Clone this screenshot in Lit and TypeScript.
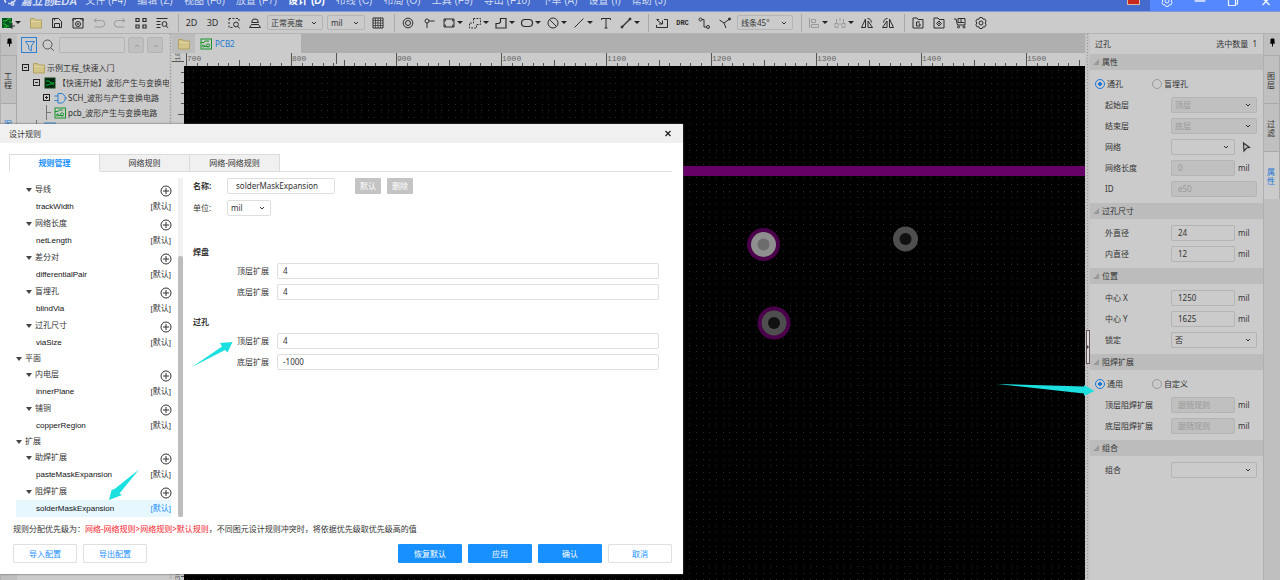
import { LitElement, html, css, svg, nothing } from "lit";
import { customElement, property } from "lit/decorators.js";
import { classMap } from "lit/directives/class-map.js";

const FONT = css`"Noto Sans", "Noto Sans CJK SC", sans-serif`;

/* Icons share a 16 x 16 grid and take the current text colour. */
const ICONS: Record<string, unknown> = {
  board: svg`<rect x="0" y="3" width="10" height="10" fill="#052" stroke="none"/><path d="M1 6h3l2-2h3M1 9h2l2 2h2M7 7h3M2 12h3" stroke="#3c3" /><path d="M7 11h6M10 8v6" stroke="#333"/>`,
  folder: svg`<path d="M2.5 3.5h4l1 1.500h6v8h-11z" fill="#d3c58a" stroke="#b3a262"/><path d="M3 6.500h10" stroke="#e2d7a4"/>`,
  save: svg`<path d="M3.500 3.500h6l3 3v6h-9z"/><path d="M5.500 12.500v-4h5v4M5.500 3.500v2"/>`,
  preview: svg`<path d="M3 6V3.500h10V6M3 3.500v9.500h10V3.500M5 3v2M11 3v2"/><circle cx="8" cy="9" r="2.500"/><circle cx="8" cy="9" r=".6"/>`,
  undo: svg`<path d="M5.500 3.500L3 5.500l2.500 2M3 5.500h7.500a2.500 2.500 0 0 1 0 6.500H3.500"/>`,
  redo: svg`<path d="M10.500 3.500L13 5.500l-2.500 2M13 5.500H5.500a2.500 2.500 0 0 0 0 6.500h7"/>`,
  apps: svg`<path d="M3 3.500h3v3H3zM10 3.500h3v3h-3zM3 10h3v3H3zM10 10h3v3h-3z" stroke-width="1.200"/>`,
  listfind: svg`<path d="M2.500 3.500h11M2.500 6.500h4M2.500 9.500h4M2.500 12.500h4" stroke-width="1.200"/><circle cx="10.500" cy="9" r="2.400"/><path d="M12.200 10.700l1.800 2.200"/>`,
  selfind: svg`<path d="M3 3.500h10v4M3 3.500v9h4" stroke-dasharray="2 1.500"/><circle cx="10" cy="9.500" r="2.400"/><path d="M11.700 11.200l2 2.300"/>`,
  layers: svg`<path d="M5 7.500V6a3 2 0 0 1 6 0v1.500M2.500 12.500l2-3h7l2 3zM4.500 7.500h7"/>`,
  dots: svg`<path d="M3 3h10v10H3z"/><path d="M5.500 3v10M8 3v10M10.500 3v10M3 5.500h10M3 8h10M3 10.500h10" stroke-width=".7"/>`,
  via: svg`<circle cx="8" cy="8" r="4.800"/><circle cx="8" cy="8" r="2.500"/>`,
  pad: svg`<circle cx="6" cy="6" r="2"/><path d="M8 6h5.500M6 8v5"/>`,
  rect: svg`<path d="M3 4h10v8H3z"/><path d="M3 6h1.500V4M13 6h-1.500V4M3 10h1.500v2M13 10h-1.500v2" stroke-width=".8"/>`,
  dashpoly: svg`<path d="M6.500 3.500h7v6h-4v3.500h-7V8h4z" stroke-dasharray="1.800 1.200"/>`,
  poly: svg`<path d="M7.500 3.500h5.500v9.500H3V8.500h3l1.500-1.500z" stroke-width="1.200"/>`,
  oval: svg`<rect x="2.500" y="4.500" width="11" height="7" rx="3.500" stroke-width="1.200"/>`,
  forbid: svg`<circle cx="8" cy="8" r="5"/><path d="M4.500 4.500l7 7"/>`,
  line: svg`<path d="M3.500 12.500L12.500 3.500"/>`,
  text: svg`<path d="M3.500 5V3.500h9V5M8 3.500v9.500M6.500 13h3"/>`,
  measure: svg`<path d="M4 12l8-8" stroke-width="1.200"/><circle cx="4" cy="12" r="1" fill="currentColor"/><circle cx="12" cy="4" r="1" fill="currentColor"/>`,
  import: svg`<path d="M5 4.500H2.500M10 4.500h3.500v8h-11V10"/><path d="M3 5l5 4M8.500 5.500V9H5"/>`,
  route: svg`<circle cx="4.500" cy="4.500" r="1.500"/><circle cx="12" cy="12" r="1.500"/><path d="M6 4.500h2v7.500h2.500"/>`,
  fan: svg`<path d="M2.500 5l4.500 3 2 5M7 8l5-3.500"/><circle cx="12.500" cy="4" r="1" fill="currentColor"/>`,
  align: svg`<path d="M3.500 3v10M5.500 4.500h4v3h-4zM5.500 9.500h7v3h-7z"/>`,
  distribute: svg`<path d="M3 8.500h3v4H3zM10 8.500h3v4h-3zM4.500 4v4M11.500 4v4M8 3v3M8 8v2"/>`,
  fliph: svg`<path d="M6.500 4v8.500h-4zM9 12.500h4.500L9 6z"/><path d="M8.500 3.500c2.500 0 3.500 1.500 4 4"/>`,
  flipv: svg`<path d="M9.500 4v8.500h4zM7 12.500H2.500L7 6z"/><path d="M7.500 3.500c-2.500 0-3.500 1.500-4 4"/>`,
  docg: svg`<path d="M3 3h4l1 1.500h5V13H3z"/><path d="M10 7H6.500v4H10V9H8.500"/>`,
  docd: svg`<path d="M3 3h4l1 1.500h5V13H3z"/><path d="M8 6l2.500 2.500L8 11 5.500 8.500z"/><circle cx="8" cy="8.500" r=".6"/>`,
  cart: svg`<path d="M2 4h2l1.500 6H13V3.500H6v4h6M9 3.500v4"/><circle cx="6.500" cy="12" r="1"/><circle cx="12" cy="12" r="1"/>`,
  gear: svg`<path d="M6.800 2.500h2.400l.8 1.700 1.900-.1 1.200 2.100L12.200 8l.9 1.800-1.200 2.100-1.900-.1-.8 1.700H6.800L6 11.800l-1.900.1-1.200-2.100L3.800 8l-.9-1.800 1.200-2.100 1.900.1z"/><circle cx="8" cy="8" r="2"/>`,
  filter: svg`<path d="M3.500 3.500h9L9.300 8v5L6.700 11V8z"/>`,
  search: svg`<circle cx="7.500" cy="7.500" r="4.500"/><path d="M10.800 10.800l3 3"/>`,
  up: svg`<path d="M6 9l2-2 2 2"/>`,
  down: svg`<path d="M6 7l2 2 2-2"/>`,
  pcb: svg`<rect x="3" y="3" width="10.500" height="10"/><path d="M3 6.500h3l1-1.500h4M6 10.500h5"/><circle cx="10" cy="9.500" r="1.600"/><circle cx="5.500" cy="10" r="1"/>`,
  sch: svg`<path d="M6 3.500h3a4 4.500 0 0 1 0 9.500H6zM2.500 6h3.500M2.500 10.500h3.500M13 8h2"/>`,
  sheet: svg`<rect x="3" y="3" width="10" height="10"/>`,
  chip: svg`<rect x="3" y="3" width="10" height="10" fill="#021" stroke="#141"/><path d="M4 6h3l2 2h3M4 10h2l2-1h4" stroke="#0b3"/>`,
  pin: svg`<path d="M7 5h3v4h-3z" fill="currentColor"/><path d="M6 9h5M8.500 9v3.500"/>`,
  plus: svg`<circle cx="8" cy="8" r="5"/><path d="M5 8h6M8 5v6"/>`,
  close: svg`<path d="M5.500 5l5 5M10.500 5l-5 5" stroke-width="1.300"/>`,
  pick: svg`<path d="M5.500 4l6 4.500-3 .5-2.500 3z" stroke-width="1.200"/>`,
  brand: svg`<path d="M3 9.500a3.500 3.500 0 0 1 1-6h6a3 3 0 0 1 .5 5.500H8M5 10.500h3" stroke-width="1.700"/><circle cx="9.500" cy="11" r="1.300" stroke-width="1.400"/>`,
  min: svg`<path d="M2.500 8h11" stroke-width="1.500"/>`,
  restore: svg`<path d="M3.500 5h7v7.500h-7zM5.500 5V3h7v8h-2" stroke-width="1.200"/>`,
  cross: svg`<path d="M4.500 5l7 7M11.500 5l-7 7" stroke-width="1.500"/>`,
};

const icon = (name: string) => html`<svg class="icon" viewBox="0 0 16 16" aria-hidden="true">${ICONS[name]}</svg>`;

const shared = css`
  * { box-sizing: border-box; }
  .icon { width: 16px; height: 16px; flex: none; display: block; fill: none; stroke: currentColor; stroke-width: 1; }
  button, input, select { font: inherit; color: inherit; margin: 0; padding: 0; border: 0; background: none; border-radius: 0; outline: 0; }
  input, select { min-width: 0; }
  .pick { display: grid; align-items: center; grid-template-rows: 100%; }
  .pick > * { grid-area: 1 / 1; }
  .pick select { appearance: none; width: 100%; height: 100%; padding: 0 3px; line-height: 12px; opacity: 1; }
  .pick .icon { justify-self: end; pointer-events: none; color: #333; }
`;

/* ---------- Title bar ---------- */
@customElement("title-bar")
class TitleBar extends LitElement {
  static styles = [shared, css`
    :host { display: flex; align-items: flex-end; height: 12px; overflow: hidden; background: #446bcd; color: #d3dcf2;
      border-bottom: 1px solid #7f9bdc; font: 10px/20px "Liberation Sans", "Noto Sans CJK SC", sans-serif; flex: none; }
    .brand { display: flex; align-items: center; height: 20px; gap: 2px; padding: 0 8px 0 3px; font-size: 11px; font-weight: 700; font-style: italic; white-space: nowrap; }
    nav { display: flex; flex: 1; gap: 11px; white-space: nowrap; }
    nav button { line-height: 20px; height: 20px; }
    .on { color: #fff; font-weight: 700; }
    .flag { width: 13px; height: 5px; margin-right: 10px; background: #c8281e; border: 1px solid #d9b9a0; border-top: 0; flex: none; align-self: flex-start; }
    .win { display: flex; height: 20px; padding: 0 6px 0 9px; gap: 17px; background: #5588ff; color: #e8efff; align-items: center; }
  `];
  render() {
    const menus = ["文件 (F4)", "编辑 (Z)", "视图 (F6)", "放置 (F7)", "设计 (D)", "布线 (C)", "布局 (O)", "工具 (F9)", "导出 (F10)", "下单 (A)", "设置 (I)", "帮助 (J)"];
    return html`
      <div class="brand">${icon("brand")}<span>嘉立创EDA</span></div>
      <nav>${menus.map((m, i) => html`<button class=${classMap({ on: i === 4 })}>${m}</button>`)}</nav>
      <span class="flag"></span>
      <div class="win">${[["gear", "设置"], ["min", "最小化"], ["restore", "还原"], ["cross", "关闭"]].map(([n, l]) => html`<button aria-label=${l}>${icon(n)}</button>`)}</div>
    `;
  }
}

/* ---------- Toolbar ---------- */
@customElement("tool-bar")
class ToolBar extends LitElement {
  static styles = [shared, css`
    :host { display: flex; align-items: center; height: 22px; background: #cbcbcb; border-bottom: 1px solid #b2b2b2; color: #2c2c2c; flex: none;
      font: 8px/14px ${FONT}; }
    .group { display: flex; align-items: center; flex: none; padding: 0 6px 0 2px; }
    .group + .group { border-left: 1px solid #aaa; }
    .group button { display: flex; align-items: center; justify-content: center; width: 21px; height: 18px; flex: none; }
    .group button.split { width: 26px; justify-content: flex-start; padding-left: 2px; }
    .group.first button.split { width: 23px; padding-left: 0; }
    .first .caret { margin-left: -3px; }
    .caret { border: 3px solid transparent; border-top: 3px solid #222; border-bottom: 0; width: 0; flex: none; }
    .group .off { color: #9a9a9a; }
    .dim { font-size: 9px; }
    .drc { font: 700 7px/14px "Liberation Mono", monospace; }
    .pick { height: 15px; border: 1px solid #b4b4b4; border-radius: 2px; margin: 0 2px; color: #333; }
    .wide { width: 56px; }
    .narrow { width: 38px; }
  `];
  private btn(name: string, split = false, off = false) {
    return html`<button aria-label=${name} class=${classMap({ split, off })}>${icon(name)}${split ? html`<i class="caret"></i>` : nothing}</button>`;
  }
  private pick(label: string, size: string) {
    return html`<span class="pick ${size}"><select aria-label=${label}><option>${label}</option></select>${icon("down")}</span>`;
  }
  render() {
    return html`
      <div class="group first">${this.btn("board", true)}${["folder", "save", "preview"].map((n) => this.btn(n))}${this.btn("undo", false, true)}${this.btn("redo", false, true)}${this.btn("apps")}${this.btn("listfind")}</div>
      <div class="group"><button class="dim">2D</button><button class="dim">3D</button>${this.btn("selfind")}${this.btn("layers")}${this.pick("正常亮度", "wide")}${this.pick("mil", "narrow")}${this.btn("dots")}</div>
      <div class="group">${this.btn("via")}${this.btn("pad")}${["rect", "dashpoly", "poly", "oval", "forbid", "line"].map((n) => this.btn(n, true))}${this.btn("text")}${this.btn("measure", true)}</div>
      <div class="group">${this.btn("import")}<button class="drc">DRC</button>${this.btn("route")}${this.btn("fan")}${this.pick("线条45°", "wide")}</div>
      <div class="group">${this.btn("align", true, true)}${this.btn("distribute", true, true)}${this.btn("fliph")}${this.btn("flipv")}</div>
      <div class="group">${["docg", "docd", "cart", "gear"].map((n) => this.btn(n))}</div>
    `;
  }
}

/* ---------- Vertical tab strip ---------- */
@customElement("side-tabs")
class SideTabs extends LitElement {
  @property({ type: Array }) tabs: string[] = [];
  @property({ type: Number }) active = 0;
  static styles = [shared, css`
    :host { display: flex; flex-direction: column; width: 17px; flex: none; background: #bfbfbf; color: #333; font: 8px/9px ${FONT}; border-left: 1px solid #b0b0b0; }
    .pin { display: flex; height: 21px; color: #000; }
    .tab { width: 100%; height: 48px; padding: 0 5px 0 3px; border-top: 1px solid #aaa; border-right: 1px solid #aaa; background: #c0c0c0; overflow-wrap: anywhere; white-space: normal; }
    .on { background: #cbcbcb; color: #1a78d8; }
  `];
  render() {
    return html`<button class="pin" aria-label="固定">${icon("pin")}</button>
      ${this.tabs.map((t, i) => html`<button class=${classMap({ tab: true, on: i === this.active })}>${t}</button>`)}`;
  }
}

/* ---------- Project tree ---------- */
@customElement("project-panel")
class ProjectPanel extends LitElement {
  static styles = [shared, css`
    :host { display: block; width: 152px; flex: none; background: #cbcbcb; color: #333; font: 8px/15px ${FONT}; overflow: hidden; }
    .bar { display: flex; align-items: center; padding: 2px 6px 6px 4px; gap: 3px; height: 26px; }
    .filter { border: 1px solid #2e80d0; color: #2e80d0; width: 16px; height: 16px; display: grid; place-items: center; }
    .find { color: #555; }
    .bar input { flex: 1; height: 16px; border: 1px solid #b4b4b4; border-radius: 2px; padding: 0 3px; }
    .step { width: 16px; height: 16px; border: 1px solid #b4b4b4; background: #c0c0c0; border-radius: 2px; color: #999; display: grid; place-items: center; }
    .row { display: flex; align-items: center; height: 15px; white-space: nowrap; }
    .d0 { padding-left: 5px; }
    .d1 { padding-left: 16px; }
    .d2 { padding-left: 26px; }
    .box { width: 7px; height: 7px; border: 1px solid #222; margin-right: 2px; flex: none; background: linear-gradient(#222, #222) center / 3px 1px no-repeat; }
    .box.more { background: linear-gradient(#222, #222) center / 3px 1px no-repeat, linear-gradient(#222, #222) center / 1px 3px no-repeat; }
    .twig { width: 5px; height: 15px; margin: 0 1px 0 3px; border-left: 1px solid #777; flex: none; background: linear-gradient(#777, #777) center / 100% 1px no-repeat; }
    .green { color: #16962a; }
    .blue { color: #2e80d0; }
  `];
  render() {
    return html`
      <div class="bar">
        <button class="filter" aria-label="过滤">${icon("filter")}</button><span class="find">${icon("search")}</span>
        <input aria-label="搜索" />
        <button class="step" aria-label="上一个">${icon("up")}</button><button class="step" aria-label="下一个">${icon("down")}</button>
      </div>
      <div class="row d0"><i class="box"></i>${icon("folder")}<span>示例工程_快速入门</span></div>
      <div class="row d1"><i class="box"></i>${icon("chip")}<span>【快速开始】波形产生与变换电路</span></div>
      <div class="row d2"><i class="box more"></i><span class="blue">${icon("sch")}</span><span>SCH_波形与产生变换电路</span></div>
      <div class="row d2"><i class="twig"></i><span class="green">${icon("pcb")}</span><span>pcb_波形产生与变换电路</span></div>
      <div class="row d1"><i class="twig"></i><span class="blue">${icon("sheet")}</span></div>
    `;
  }
}

/* ---------- Board canvas with rulers ---------- */
const STEP = 105; /* pixels for 100 mil */

@customElement("board-view")
class BoardView extends LitElement {
  static styles = [shared, css`
    :host { display: flex; flex-direction: column; flex: 1; min-width: 0; background: #000; font: 8px/16px ${FONT}; }
    .tabs { display: flex; height: 19px; flex: none; background: #afafaf; }
    .tabs button { display: flex; align-items: center; }
    .home { width: 23px; justify-content: center; background: #bcbcbc; }
    .doc { width: 106px; padding: 0 3px; gap: 1px; background: #cbcbcb; color: #1a78d8; }
    .doc .icon { color: #16962a; }
    .top { display: block; width: 100%; height: 13px; flex: none; background: #cbcbcb; overflow: hidden; }
    .mid { display: flex; flex: 1; min-height: 0; }
    .left { display: block; width: 12px; height: 100%; flex: none; background: #cbcbcb; }
    .art { display: block; flex: 1; min-width: 0; height: 100%; }
    .tick { stroke: #555; fill: none; shape-rendering: crispEdges; }
    .num { font: 8px "Liberation Mono", monospace; fill: #666; }
  `];
  private ticks(start: number, count: number, vertical: boolean, depth: number) {
    let d = "";
    for (let i = 0; i < count; i++) {
      const p = Math.round(start + (i * STEP) / 10);
      const len = i % 10 === 0 ? depth : i % 5 === 0 ? 6 : 3;
      d += vertical ? `M${depth - len} ${p}.5h${len}` : `M${p}.5 ${depth - len}v${len}`;
    }
    return d;
  }
  render() {
    const xs = [...Array(24)].map((_, i) => i);
    let dots = "";
    for (let r = 0; r < 10; r++) for (let c = 0; c < 10; c++) dots += `M${Math.round(c * 6.7)} ${Math.round(r * 6.7)}h1v1h-1z`;
    return html`
      <div class="tabs"><button class="home" aria-label="工程">${icon("folder")}</button><button class="doc">${icon("pcb")}<span>PCB2</span></button></div>
      <svg class="top">
        <path class="tick" d=${this.ticks(14, 240, false, 13)} />
        <path class="tick" d="M164.500 0v11" />
        ${xs.map((i) => svg`<text class="num" x=${15 + i * STEP} y="8">${700 + i * 100}</text>`)}
        <path class="tick" d="M0 8.500h12" /><text class="num" transform="translate(8 8) rotate(-90)">1800</text>
      </svg>
      <div class="mid">
        <svg class="left">
          <path class="tick" d=${this.ticks(-5, 120, true, 12)} />
          ${xs.slice(1).map((i) => svg`<text class="num" transform="translate(8 ${i * STEP - 6}) rotate(-90)">${1800 - i * 100}</text>`)}
        </svg>
        <svg class="art">
          <defs><pattern id="grid" x="16" y="4" width="67" height="67" patternUnits="userSpaceOnUse"><path d=${dots} fill="#2a2a2a" shape-rendering="crispEdges" /></pattern></defs>
          <rect width="100%" height="100%" fill="#000" /><rect width="100%" height="100%" fill="url(#grid)" />
          <rect y="100" width="100%" height="10" fill="#660066" />
          <circle cx="579.500" cy="178.500" r="16.500" fill="#4b004b" /><circle cx="579.500" cy="178.500" r="12.500" fill="#8f8f8f" /><circle cx="579.500" cy="178.500" r="6" fill="#6c6c6c" />
          <circle cx="721.500" cy="173" r="12.500" fill="#4e4e4e" /><circle cx="721.500" cy="173" r="6" fill="#111" />
          <circle cx="590" cy="257" r="16.500" fill="#4b004b" /><circle cx="590" cy="257" r="12.500" fill="#4e4e4e" /><circle cx="590" cy="257" r="6" fill="#111" />
        </svg>
      </div>
    `;
  }
}

/* ---------- Property panel ---------- */
type Field = { label: string; kind: "text" | "select"; value: string; unit?: string; off?: boolean; wide?: boolean; pick?: boolean };
type Section = { title: string; radios?: string[]; fields: Field[] };

const SECTIONS: Section[] = [
  { title: "属性", radios: ["通孔", "盲埋孔"], fields: [
    { label: "起始层", kind: "select", value: "顶层", off: true, wide: true },
    { label: "结束层", kind: "select", value: "底层", off: true, wide: true },
    { label: "网络", kind: "select", value: "", pick: true },
    { label: "网络长度", kind: "text", value: "0", off: true, unit: "mil" },
    { label: "ID", kind: "text", value: "e50", off: true, wide: true } ] },
  { title: "过孔尺寸", fields: [
    { label: "外直径", kind: "text", value: "24", unit: "mil" },
    { label: "内直径", kind: "text", value: "12", unit: "mil" } ] },
  { title: "位置", fields: [
    { label: "中心 X", kind: "text", value: "1250", unit: "mil" },
    { label: "中心 Y", kind: "text", value: "1625", unit: "mil" },
    { label: "锁定", kind: "select", value: "否", wide: true } ] },
  { title: "阻焊扩展", radios: ["通用", "自定义"], fields: [
    { label: "顶层阻焊扩展", kind: "text", value: "跟随规则", off: true, unit: "mil" },
    { label: "底层阻焊扩展", kind: "text", value: "跟随规则", off: true, unit: "mil" } ] },
  { title: "组合", fields: [{ label: "组合", kind: "select", value: "", wide: true }] },
];

@customElement("property-panel")
class PropertyPanel extends LitElement {
  static styles = [shared, css`
    :host { display: block; width: 173px; flex: none; background: #cbcbcb; color: #333; font: 8px/16px ${FONT}; }
    .head { display: flex; justify-content: space-between; align-items: center; height: 20px; padding: 0 6px 0 5px; }
    h2 { display: flex; align-items: center; gap: 3px; height: 16px; margin: 0; padding-left: 3px; background: #bcbcbc; font: inherit; }
    h2 i { border: 3px solid transparent; border-right-color: #999; border-bottom-color: #999; }
    .body { display: grid; gap: 5px; padding: 6px 6px 6px 15px; }
    .row { display: flex; align-items: center; height: 16px; }
    .row > label:first-child { width: 66px; flex: none; }
    .radios { display: grid; grid-template-columns: 57px 1fr; height: 16px; padding: 0; margin: 0 0 0 -10px; border: 0; }
    .radios label { display: flex; align-items: center; gap: 2px; }
    .radios input { appearance: none; width: 10px; height: 10px; border: 1px solid #999; border-radius: 50%; flex: none; }
    .radios input:checked { border-color: #1a78d8; background: radial-gradient(circle, #1a78d8 0 2px, transparent 2px); }
    .ctl { width: 64px; height: 16px; border: 1px solid #b4b4b4; border-radius: 2px; flex: none; }
    .wide { width: 86px; }
    input.ctl { padding: 0 6px; }
    .off, .off select { color: #999; background: #c0c0c0; opacity: 1; }
    .unit { padding-left: 3px; }
    .pickbtn { margin-left: 3px; }
  `];
  private field(f: Field, id: string) {
    const cls = { ctl: true, wide: !!f.wide, off: !!f.off };
    return html`<div class="row"><label for=${id}>${f.label}</label>
      ${f.kind === "text"
        ? html`<input id=${id} class=${classMap(cls)} .value=${f.value} ?disabled=${!!f.off} />`
        : html`<span class=${classMap({ ...cls, pick: true })}><select id=${id} ?disabled=${!!f.off}><option>${f.value}</option></select>${icon("down")}</span>`}
      ${f.unit ? html`<span class="unit">${f.unit}</span>` : nothing}
      ${f.pick ? html`<button class="pickbtn" aria-label="拾取">${icon("pick")}</button>` : nothing}</div>`;
  }
  render() {
    return html`<div class="head"><span>过孔</span><span>选中数量&nbsp; 1</span></div>
      ${SECTIONS.map((s, si) => html`<section><h2><i></i>${s.title}</h2><div class="body">
        ${s.radios ? html`<div class="radios" role="radiogroup" aria-label=${s.title}>${s.radios.map((r, i) => html`<label><input type="radio" name="r${si}" ?checked=${i === 0} />${r}</label>`)}</div>` : nothing}
        ${s.fields.map((f, i) => this.field(f, `f${si}-${i}`))}</div></section>`)}`;
  }
}

/* ---------- Design rule dialog ---------- */
type Node = { level: 0 | 1 | 2; text: string };
const RULES: Node[] = [
  { level: 1, text: "导线" }, { level: 2, text: "trackWidth" },
  { level: 1, text: "网络长度" }, { level: 2, text: "netLength" },
  { level: 1, text: "差分对" }, { level: 2, text: "differentialPair" },
  { level: 1, text: "盲埋孔" }, { level: 2, text: "blindVia" },
  { level: 1, text: "过孔尺寸" }, { level: 2, text: "viaSize" },
  { level: 0, text: "平面" },
  { level: 1, text: "内电层" }, { level: 2, text: "innerPlane" },
  { level: 1, text: "铺铜" }, { level: 2, text: "copperRegion" },
  { level: 0, text: "扩展" },
  { level: 1, text: "助焊扩展" }, { level: 2, text: "pasteMaskExpansion" },
  { level: 1, text: "阻焊扩展" }, { level: 2, text: "solderMaskExpansion" },
];

@customElement("rule-dialog")
class RuleDialog extends LitElement {
  static styles = [shared, css`
    :host { display: block; background: #fff; color: #333; font: 8px/16px ${FONT}; box-shadow: 0 0 2px #555; }
    .title { display: flex; align-items: center; justify-content: space-between; height: 19px; padding: 0 7px 0 9px; background: #f0f0f0; }
    .title button { color: #222; }
    .tabs { display: flex; padding: 11px 11px 0 9px; }
    .tabs button { width: 90px; height: 18px; background: #f0f0f0; border: 1px solid #dcdcdc; border-left-width: 0; }
    .tabs button.on { width: 91px; background: #fff; color: #1890ff; font-weight: 700; border-bottom-color: #fff; border-left-width: 1px; }
    .tabs::after { content: ""; flex: 1; border-bottom: 1px solid #e2e2e2; }
    .main { display: flex; padding: 6px 24px 0 16px; }
    .tree { width: 155px; padding-top: 3px; font-family: "Liberation Sans", "Noto Sans CJK SC", sans-serif; flex: none; }
    .node { display: flex; align-items: center; height: 17px; gap: 3px; padding-left: 10px; }
    .top { height: 15px; padding-left: 0; }
    .leaf { padding-left: 20px; color: #111; }
    .node span:first-of-type { flex: 1; }
    .tri { border: 3px solid transparent; border-top: 4px solid #444; border-bottom: 0; flex: none; }
    .add { margin-right: -3px; align-self: flex-end; height: 15px; }
    .tag { color: #333; }
    .sel { background: #e6f7ff; }
    .sel .tag { color: #1890ff; }
    .scroll { width: 5px; margin-left: 7px; background: #f1f1f1; display: flex; flex-direction: column; justify-content: flex-end; flex: none; }
    .scroll i { height: 77%; background: #bdbdbd; border-radius: 2px; }
    .form { flex: 1; margin-left: 10px; }
    .line { display: flex; align-items: center; height: 16px; }
    .line > label { width: 34px; flex: none; }
    .form input, .form .pick { height: 16px; border: 1px solid #dedede; border-radius: 2px; }
    .form input { padding: 0 5px; }
    .line .name { width: 108px; padding: 0 8px; margin-right: 20px; }
    .grey { width: 26px; height: 16px; background: #c4c4c4; color: #fff; border-radius: 1px; margin-right: 6px; }
    .unit { width: 44px; }
    .unitline { margin-top: 6px; }
    h3 { margin: 0 0 3px; font: inherit; font-weight: 700; padding-top: 28px; }
    h3.next { padding-top: 14px; }
    .b { font-weight: 700; }
    .pair + .pair { margin-top: 5px; }
    .pair { display: flex; align-items: center; height: 16px; padding-left: 44px; }
    .pair label { width: 40px; flex: none; }
    .pair input { flex: 1; }
    .note { margin: 0; padding: 4px 13px 0; }
    .note em { font-style: normal; color: #f5222d; }
    .foot { display: flex; gap: 6px; padding: 7px 11px 11px 13px; }
    .foot button { width: 64px; height: 19px; border: 1px solid #e0e0e0; border-radius: 1px; color: #1890ff; }
    .foot .primary { background: #1890ff; border-color: #1890ff; color: #fff; }
    .foot i { flex: 1; }
  `];
  private pair(id: string, label: string, value: string) {
    return html`<div class="pair"><label for=${id}>${label}</label><input id=${id} .value=${value} /></div>`;
  }
  render() {
    return html`
      <div class="title"><span>设计规则</span><button aria-label="关闭">${icon("close")}</button></div>
      <div class="tabs"><button class="on">规则管理</button><button>网络规则</button><button>网络-网络规则</button></div>
      <div class="main">
        <div class="tree">${RULES.map((n, i) => html`<div class=${classMap({ node: true, top: n.level === 0, leaf: n.level === 2, sel: i === RULES.length - 1 })}>
          ${n.level < 2 ? html`<i class="tri"></i>` : nothing}<span>${n.text}</span>
          ${n.level === 1 ? html`<button class="add" aria-label="添加${n.text}">${icon("plus")}</button>` : nothing}
          ${n.level === 2 ? html`<span class="tag">[默认]</span>` : nothing}</div>`)}</div>
        <div class="scroll"><i></i></div>
        <div class="form">
          <div class="line"><label class="b" for="name">名称:</label><input id="name" class="name" .value=${"solderMaskExpansion"} /><button class="grey">默认</button><button class="grey">删除</button></div>
          <div class="line unitline"><label for="unit">单位:</label><span class="pick unit"><select id="unit"><option>mil</option></select>${icon("down")}</span></div>
          <h3>焊盘</h3>
          ${this.pair("p1", "顶层扩展", "4")}${this.pair("p2", "底层扩展", "4")}
          <h3 class="next">过孔</h3>
          ${this.pair("v1", "顶层扩展", "4")}${this.pair("v2", "底层扩展", "-1000")}
        </div>
      </div>
      <p class="note">规则分配优先级为：<em>网络-网络规则&gt;网络规则&gt;默认规则</em>，不同图元设计规则冲突时，将依据优先级取优先级高的值</p>
      <div class="foot"><button>导入配置</button><button>导出配置</button><i></i><button class="primary">恢复默认</button><button class="primary">应用</button><button class="primary">确认</button><button>取消</button></div>
    `;
  }
}

/* ---------- Page ---------- */
@customElement("app-root")
class AppRoot extends LitElement {
  static styles = [shared, css`
    :host { display: flex; flex-direction: column; height: 100vh; position: relative; overflow: hidden; background: #cbcbcb; }
    .work { display: flex; flex: 1; min-height: 0; }
    .split { width: 5px; flex: none; background: #c4c4c4; display: flex; align-items: center; justify-content: flex-end;
      background-image: repeating-linear-gradient(#999 0 1px, transparent 1px 3px); background-size: 1px 100%; background-position: center; background-repeat: no-repeat; }
    .thin { width: 3px; }
    .grip { display: flex; align-items: center; width: 4px; height: 34px; margin-bottom: -80px; background: #ddd; border: 1px solid #655; }
    .grip::after { content: ""; border: 2px solid transparent; border-left-color: #433; border-right: 0; }
    rule-dialog { position: absolute; left: 0; top: 124px; width: 683px; }
    .marks { position: absolute; inset: 0; width: 100%; height: 100%; pointer-events: none; fill: #1ce0e0; }
  `];
  render() {
    return html`
      <title-bar></title-bar>
      <tool-bar></tool-bar>
      <div class="work">
        <side-tabs .tabs=${["工程", "图页"]} .active=${1}></side-tabs>
        <project-panel></project-panel>
        <div class="split thin"></div>
        <board-view></board-view>
        <div class="split"><i class="grip"></i></div>
        <property-panel></property-panel>
        <side-tabs .tabs=${["图层", "过滤", "属性"]} .active=${2}></side-tabs>
      </div>
      <rule-dialog></rule-dialog>
      <svg class="marks" aria-hidden="true">
        <path d="M192 367L222 346.500l-2-3.500 12.500-1-5 10.500-2.500-2.500z" />
        <path d="M139 469.500L114.500 489l-3 1-2.500 10 13-5-2.500-1.500z" />
        <path d="M997 384l87 2.500v-1.500l10.500 6-10.500 5v-2.500z" />
      </svg>
    `;
  }
}
